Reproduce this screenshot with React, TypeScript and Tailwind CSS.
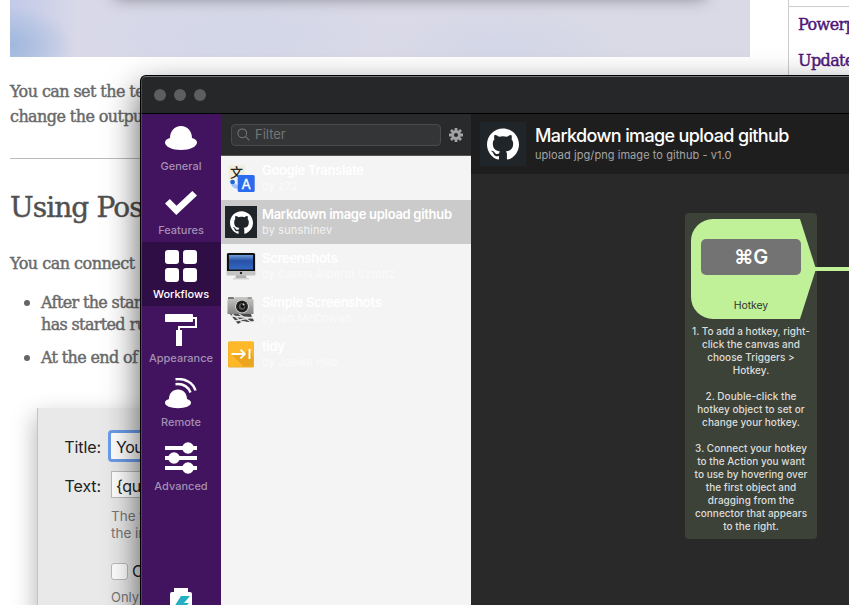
import React from "react";
import { SiGithub } from "react-icons/si";

const serif = "font-['DejaVu_Serif',serif] [-webkit-text-stroke:0.45px_currentColor]";

const GeneralIcon = () => (
  <svg viewBox="0 0 32 32" className="size-8" fill="#fff">
    <path d="M5 16C5 9 9.500 4 16 4s11 5 11 12c3 .8 5 2.200 5 4.500 0 4-7 7.500-16 7.500S0 24.500 0 20.500C0 18.200 2 16.800 5 16Z" />
  </svg>
);
const FeaturesIcon = () => (
  <svg viewBox="0 0 32 32" className="size-8" fill="#fff">
    <path d="M0 17.500 4.800 13l6.700 6.800L27.300 5 32 9.600 11.300 29Z" />
  </svg>
);
const WorkflowsIcon = () => (
  <svg viewBox="0 0 32 32" className="size-8" fill="#fff">
    <rect width="14" height="14" rx="3" />
    <rect x="18" width="14" height="14" rx="3" />
    <rect y="18" width="14" height="14" rx="3" />
    <rect x="18" y="18" width="14" height="14" rx="3" />
  </svg>
);
const AppearanceIcon = () => (
  <svg viewBox="0 0 32 32" className="size-8" fill="#fff">
    <rect width="28" height="8" rx=".8" />
    <rect x="11" y="16" width="6" height="16" />
    <path d="M28 4h3v9H14v4" fill="none" stroke="#fff" strokeWidth="2" />
  </svg>
);
const RemoteIcon = () => (
  <svg viewBox="0 0 32 32" className="size-8" fill="#fff">
    <path d="M4 21c0-5.500 3.600-9.500 9-9.500s9 4 9 9.500c2.500.8 4 1.900 4 3.800 0 3.200-5.700 5.400-13 5.400S0 28 0 24.800C0 22.900 1.500 21.800 4 21Z" />
    <path d="M10.500 6.200C18 5.500 23 8.500 25.500 14.500M10.500 1.200C20 .2 28 4.500 30.500 12.500" fill="none" stroke="#fff" strokeWidth="2.500" />
  </svg>
);
const AdvancedIcon = () => (
  <svg viewBox="0 0 32 32" className="size-8" fill="#fff">
    <path d="M0 4h32v4H0zM0 14h32v4H0zM0 24h32v4H0z" />
    <circle cx="23" cy="6" r="5.800" />
    <circle cx="9" cy="16" r="5.800" />
    <circle cx="23" cy="26" r="5.800" />
  </svg>
);

const nav = [
  { name: "General", Icon: GeneralIcon },
  { name: "Features", Icon: FeaturesIcon },
  { name: "Workflows", Icon: WorkflowsIcon, active: true },
  { name: "Appearance", Icon: AppearanceIcon },
  { name: "Remote", Icon: RemoteIcon },
  { name: "Advanced", Icon: AdvancedIcon },
];

const Translate = () => (
  <svg viewBox="0 0 32 32" className="size-8">
    <rect x="3.500" y="3" width="16.500" height="17" rx="1.500" fill="#f1eedf" />
    <text x="5" y="15" fontSize="13" fontWeight="500" fill="#252525" fontFamily="Noto Sans CJK SC, sans-serif">文</text>
    <path d="M8 19v2c0 3 3 4 7 4" fill="none" stroke="#a4c3fa" strokeWidth="4" />
    <circle cx="7.500" cy="20" r="2.300" fill="#1767df" />
    <rect x="12.700" y="13" width="17" height="17" rx="1.500" fill="#2c6bed" />
    <text x="21.200" y="26.500" fontSize="13.500" textAnchor="middle" fill="#fff" stroke="#fff" strokeWidth=".3" fontFamily="Inter, sans-serif">A</text>
  </svg>
);
const Github = () => (
  <div className="flex size-8 items-center justify-center bg-[#20252a]">
    <SiGithub className="size-[23px] text-white" />
  </div>
);
const Monitor = () => (
  <svg viewBox="0 0 32 32" className="size-8">
    <defs>
      <linearGradient id="screen" x1="0" x2="0" y1="0" y2="1">
        <stop stopColor="#6f9fd8" /><stop offset=".4" stopColor="#2850a6" /><stop offset="1" stopColor="#3368c4" />
      </linearGradient>
    </defs>
    <path d="M11 25h10l.7 4H10.300Z" fill="#b0b0b0" />
    <rect x="8" y="28" width="16" height="1.500" rx=".5" fill="#d3d3d3" />
    <rect x="1.500" y="3" width="29" height="22.500" rx="1.500" fill="#c3c3c3" />
    <path d="M2 4.500Q2 3 3.500 3h25Q30 3 30 4.500V21H2Z" fill="#111" />
    <rect x="4" y="5" width="24" height="14.500" fill="url(#screen)" />
    <circle cx="16" cy="23" r="1.200" fill="#222" />
  </svg>
);
const Camera = () => (
  <svg viewBox="0 0 32 32" className="size-8">
    <defs>
      <linearGradient id="body" x1="0" x2="0" y1="0" y2="1">
        <stop stopColor="#c8c8c6" /><stop offset="1" stopColor="#858583" />
      </linearGradient>
    </defs>
    <path d="m4 19 9 11 5-3 5 1 6-1-4-9Z" fill="#494949" />
    <path d="m6 22 22 2m-18 3 18-4m-14-3 12 8M7 20l10 8" stroke="#e2e2e2" strokeWidth="1.300" />
    <rect x="3" y="3" width="6" height="3" rx="1" fill="#777" />
    <rect x="22" y="3" width="5" height="3" rx="1" fill="#999" />
    <path d="M10 3h12l1 2h4.500q1 0 1 1v14h-26V6q0-1 1-1H9Z" fill="url(#body)" />
    <circle cx="17" cy="12.500" r="6.800" fill="#ddd" />
    <circle cx="17" cy="12.500" r="6" fill="#252525" />
    <circle cx="17" cy="12.500" r="4" fill="#555" stroke="#111" />
    <circle cx="17.500" cy="12" r="2" fill="#111" />
    <circle cx="18.500" cy="10.500" r=".9" fill="#ddd" />
  </svg>
);
const Tidy = () => (
  <svg viewBox="0 0 32 32" className="size-8">
    <rect x="3" y="3.500" width="26" height="26" rx="1.500" fill="#ecac2b" />
    <rect x="3.500" y="3.500" width="25" height="25" rx="1.500" fill="#ffb928" />
    <path d="m7 17 11.500 11.500H28.500V20L25 11l-7 5Z" fill="#eca51f" />
    <path d="M6.500 16h13m-4-4.300 4.300 4.300-4.300 4.300M24.500 11v10" fill="none" stroke="#fff" strokeWidth="1.900" />
  </svg>
);

const workflows = [
  { title: "Google Translate", by: "by z72", Icon: Translate },
  { title: "Markdown image upload github", by: "by sunshinev", Icon: Github, active: true },
  { title: "Screenshots", by: "by Carlos Alberto Sztoltz", Icon: Monitor },
  { title: "Simple Screenshots", by: "by Ian McCowan", Icon: Camera },
  { title: "tidy", by: "by Jaewe Heo", Icon: Tidy },
];

const Gear = () => (
  <svg viewBox="0 0 16 16" className="size-4">
    <g stroke="#a3a3a4" strokeWidth="2.800">
      <path d="M8 1v14M1 8h14M3 3l10 10M3 13 13 3" />
    </g>
    <circle cx="8" cy="8" r="4.800" fill="#a3a3a4" />
    <circle cx="8" cy="8" r="2.100" fill="#292a2c" />
  </svg>
);

function Article() {
  return (
    <div className="flex h-full items-start justify-between overflow-hidden bg-white">
      <main className={`ml-2.5 w-[740px] text-base text-[#6a6a6a] ${serif}`}>
        <div className="h-[57px] overflow-hidden bg-[radial-gradient(ellipse_62px_40px_at_0px_45px,#a0b8dd,transparent),radial-gradient(ellipse_160px_45px_at_240px_35px,#d3d7e8,transparent),radial-gradient(ellipse_130px_40px_at_490px_45px,#d3d6e7,transparent),linear-gradient(90deg,#c2cae8_0%,#d8d8e8_9%,#dbdae8_50%,#dadae6_100%)]">
          <div className="-mt-[22px] ml-[105px] h-5 w-[590px] shadow-[0_0_16px_rgba(60,60,70,0.6)]" />
        </div>
        <p className="mt-[22px] text-[16px] leading-[25px] tracking-[-0.58px]">You can set the te<br />change the outpu</p>
        <div className="mt-[29px] h-px bg-[#bbb]" />
        <h2 className="mt-[30px] text-[28px] leading-[38px] tracking-[-0.9px] text-[#505050]">Using Pos</h2>
        <p className="mt-[25px] leading-6 tracking-[-0.5px]">You can connect</p>
        <ul className="mt-4 ml-8 list-none leading-[22px] tracking-[-0.65px]">
          <li className="-ml-[18px] flex gap-[11px]"><span className="mt-2 size-1.5 rounded-full bg-[#666]" /><span>After the star<br />has started ru</span></li>
          <li className="-ml-[18px] mt-[11px] flex gap-[11px]"><span className="mt-2 size-1.5 rounded-full bg-[#666]" /><span>At the end of</span></li>
        </ul>
        <div className="mt-[39px] ml-[27px] grid h-[230px] w-[500px] grid-cols-[63px_1fr] content-start gap-x-[10px] border-l border-[#c3c3c3] bg-[#e9e9e9] pt-[22px] font-['Inter','Liberation_Sans',sans-serif] text-[16px] text-[#222] shadow-[-2px_8px_22px_rgba(0,0,0,0.28)] [-webkit-text-stroke:0]">
          <span className="text-right leading-[34px] tracking-[-0.1px]">Title:</span>
          <span className="-ml-[3px] h-8 w-80 rounded-sm border-[3px] border-[#6b9ce8] bg-white pl-[5px] leading-[29px] tracking-[-0.5px]">You</span>
          <span className="mt-2 text-right leading-[29px] tracking-[-0.1px]">Text:</span>
          <span className="mt-[7px] h-[27px] w-80 border border-[#bbb] bg-white pl-1 leading-[28px] tracking-[-0.3px]">{"{qu"}</span>
          <span className="col-start-2 mt-[7px] text-[13.500px] leading-[17px] text-[#777]">The t<br />the in</span>
          <span className="col-start-2 mt-[17px] flex items-center gap-1"><span className="size-[17px] rounded-[3px] border border-[#bbb] bg-white" />C</span>
          <span className="col-start-2 mt-1 text-[13px] leading-[20px] text-[#777]">Only</span>
        </div>
      </main>
      <aside className={`h-20 w-[61px] overflow-hidden border-l border-[#ccc] pt-1.5 text-[16px] whitespace-nowrap text-[#4f1779] ${serif}`}>
        <div className="border-t border-[#ccc] pl-[9px]">
          <div className="h-9 leading-[35px] tracking-[-0.6px]">Powerp</div>
          <div className="h-9 leading-[35px] tracking-[-0.6px]">Update</div>
        </div>
      </aside>
    </div>
  );
}

function Sidebar() {
  return (
    <nav className="flex w-[79px] shrink-0 flex-col bg-[#42145f]">
      {nav.map(({ name, Icon, active }) => (
        <div key={name} className={`flex h-16 shrink-0 flex-col items-center pt-2 pr-px text-[11px] leading-[14px] font-medium ${active ? "bg-[#2f0d45] text-white" : "text-[#a48fb2]"}`}>
          <Icon />
          <span className="mt-[5px]">{name}</span>
        </div>
      ))}
      <svg viewBox="0 0 24 32" className="mt-[90px] ml-[27px] h-8 w-6 shrink-0">
        <path d="M5 0h14v4h2q2 0 2 2v26H1V6q0-2 2-2h2Z" fill="#fff" />
        <path d="M12 8h9l-6 7h5L6 29l4-10H5Z" fill="#25afc0" />
      </svg>
    </nav>
  );
}

function WorkflowList() {
  return (
    <section className="flex w-[250px] shrink-0 flex-col bg-[#f4f4f4]">
      <div className="flex h-[42px] shrink-0 items-center gap-[7px] border-b border-[#555] bg-[#292a2c] pl-2.5">
        <div className="flex h-[22px] w-[210px] items-center gap-[5px] rounded-[4px] border border-[#4a4b4d] bg-[#343537] pl-[5px] text-[13px] text-[#747576]">
          <svg viewBox="0 0 14 14" className="size-[13px]" fill="none" stroke="#77787a" strokeWidth="1.100"><circle cx="5.700" cy="5.700" r="4.700" /><path d="m9 9 4.300 4.300" /></svg>
          Filter
        </div>
        <Gear />
      </div>
      {workflows.map(({ title, by, Icon, active }) => (
        <div key={title} className={`flex h-11 shrink-0 items-center gap-[5px] pl-1 ${active ? "bg-[#cbcbcb]" : ""}`}>
          <Icon />
          <div className="pb-px whitespace-nowrap">
            <div className="text-[13px] leading-4 font-semibold tracking-[-0.3px] text-white">{title}</div>
            <div className={`text-[11px] leading-[16px] tracking-[0.15px] ${active ? "text-[#f2f2f2]" : "text-[#fbfbfb]"}`}>{by}</div>
          </div>
        </div>
      ))}
    </section>
  );
}

function Canvas() {
  return (
    <section className="min-w-0 flex-1 overflow-hidden bg-[#292929]">
      <header className="flex h-[60px] gap-[9px] bg-[#1e1e1e] pt-2 pl-[9px]">
        <div className="flex h-11 w-[46px] items-center justify-center bg-[#20252a]"><SiGithub className="size-8 text-white" /></div>
        <div className="pt-[2px] whitespace-nowrap">
          <h1 className="text-[18px] leading-6 font-medium tracking-[-0.63px] text-white">Markdown image upload github</h1>
          <p className="text-[11px] leading-[14px] tracking-[0.06px] text-[#a5a5a5]">upload jpg/png image to github - v1.0</p>
        </div>
      </header>
      <div className="mt-[39px] ml-[214px] flex items-start">
        <div className="h-[326px] w-[132px] shrink-0 rounded-[4px] bg-[#3d4238] pt-1.5 text-center">
          <div className="ml-1.5 h-[100px] w-[125px] rounded-l-[22px] bg-[#c0f198] pt-5 [clip-path:polygon(0_0,109px_0,100%_50%,109px_100%,0_100%)]">
            <div className="ml-2.5 h-9 w-[100px] rounded-[5px] bg-[#737373] text-[20px] leading-9 font-semibold tracking-[-0.4px] text-white">⌘G</div>
            <div className="mt-6 w-[120px] text-[10.500px] leading-[14px] tracking-[-0.1px] text-[#333]">Hotkey</div>
          </div>
          <div className="mt-1.5 text-[10px] leading-[13px] font-medium tracking-[0.03px] whitespace-nowrap text-[#dcddda]">
            1. To add a hotkey, right-<br />click the canvas and<br />choose Triggers &gt;<br />Hotkey.<br /><br />
            2. Double-click the<br />hotkey object to set or<br />change your hotkey.<br /><br />
            3. Connect your hotkey<br />to the Action you want<br />to use by hovering over<br />the first object and<br />dragging from the<br />connector that appears<br />to the right.
          </div>
        </div>
        <div className="mt-[54px] -ml-[2px] h-1 flex-1 bg-[#c0f198]" />
      </div>
    </section>
  );
}

export default function App() {
  return (
    <div className="relative h-[605px] w-[849px] overflow-hidden">
      <Article />
      <div className="absolute top-[75px] left-[140px] flex h-[560px] w-[730px] flex-col overflow-hidden rounded-tl-[6px] border-t border-l border-black bg-[#262729] font-['Inter','Liberation_Sans',sans-serif] shadow-[0_14px_34px_rgba(0,0,0,0.65)]">
        <div className="flex h-[38px] shrink-0 items-center gap-2 rounded-tl-[5px] border-t border-b border-l border-t-[#737476] border-b-black border-l-[#4a4b4d] pl-3">
          <i className="size-3 rounded-full bg-[#5d5e60]" /><i className="size-3 rounded-full bg-[#5d5e60]" /><i className="size-3 rounded-full bg-[#5d5e60]" />
        </div>
        <div className="flex min-h-0 flex-1 border-l border-[#5c3b70]">
          <Sidebar />
          <WorkflowList />
          <Canvas />
        </div>
      </div>
    </div>
  );
}
